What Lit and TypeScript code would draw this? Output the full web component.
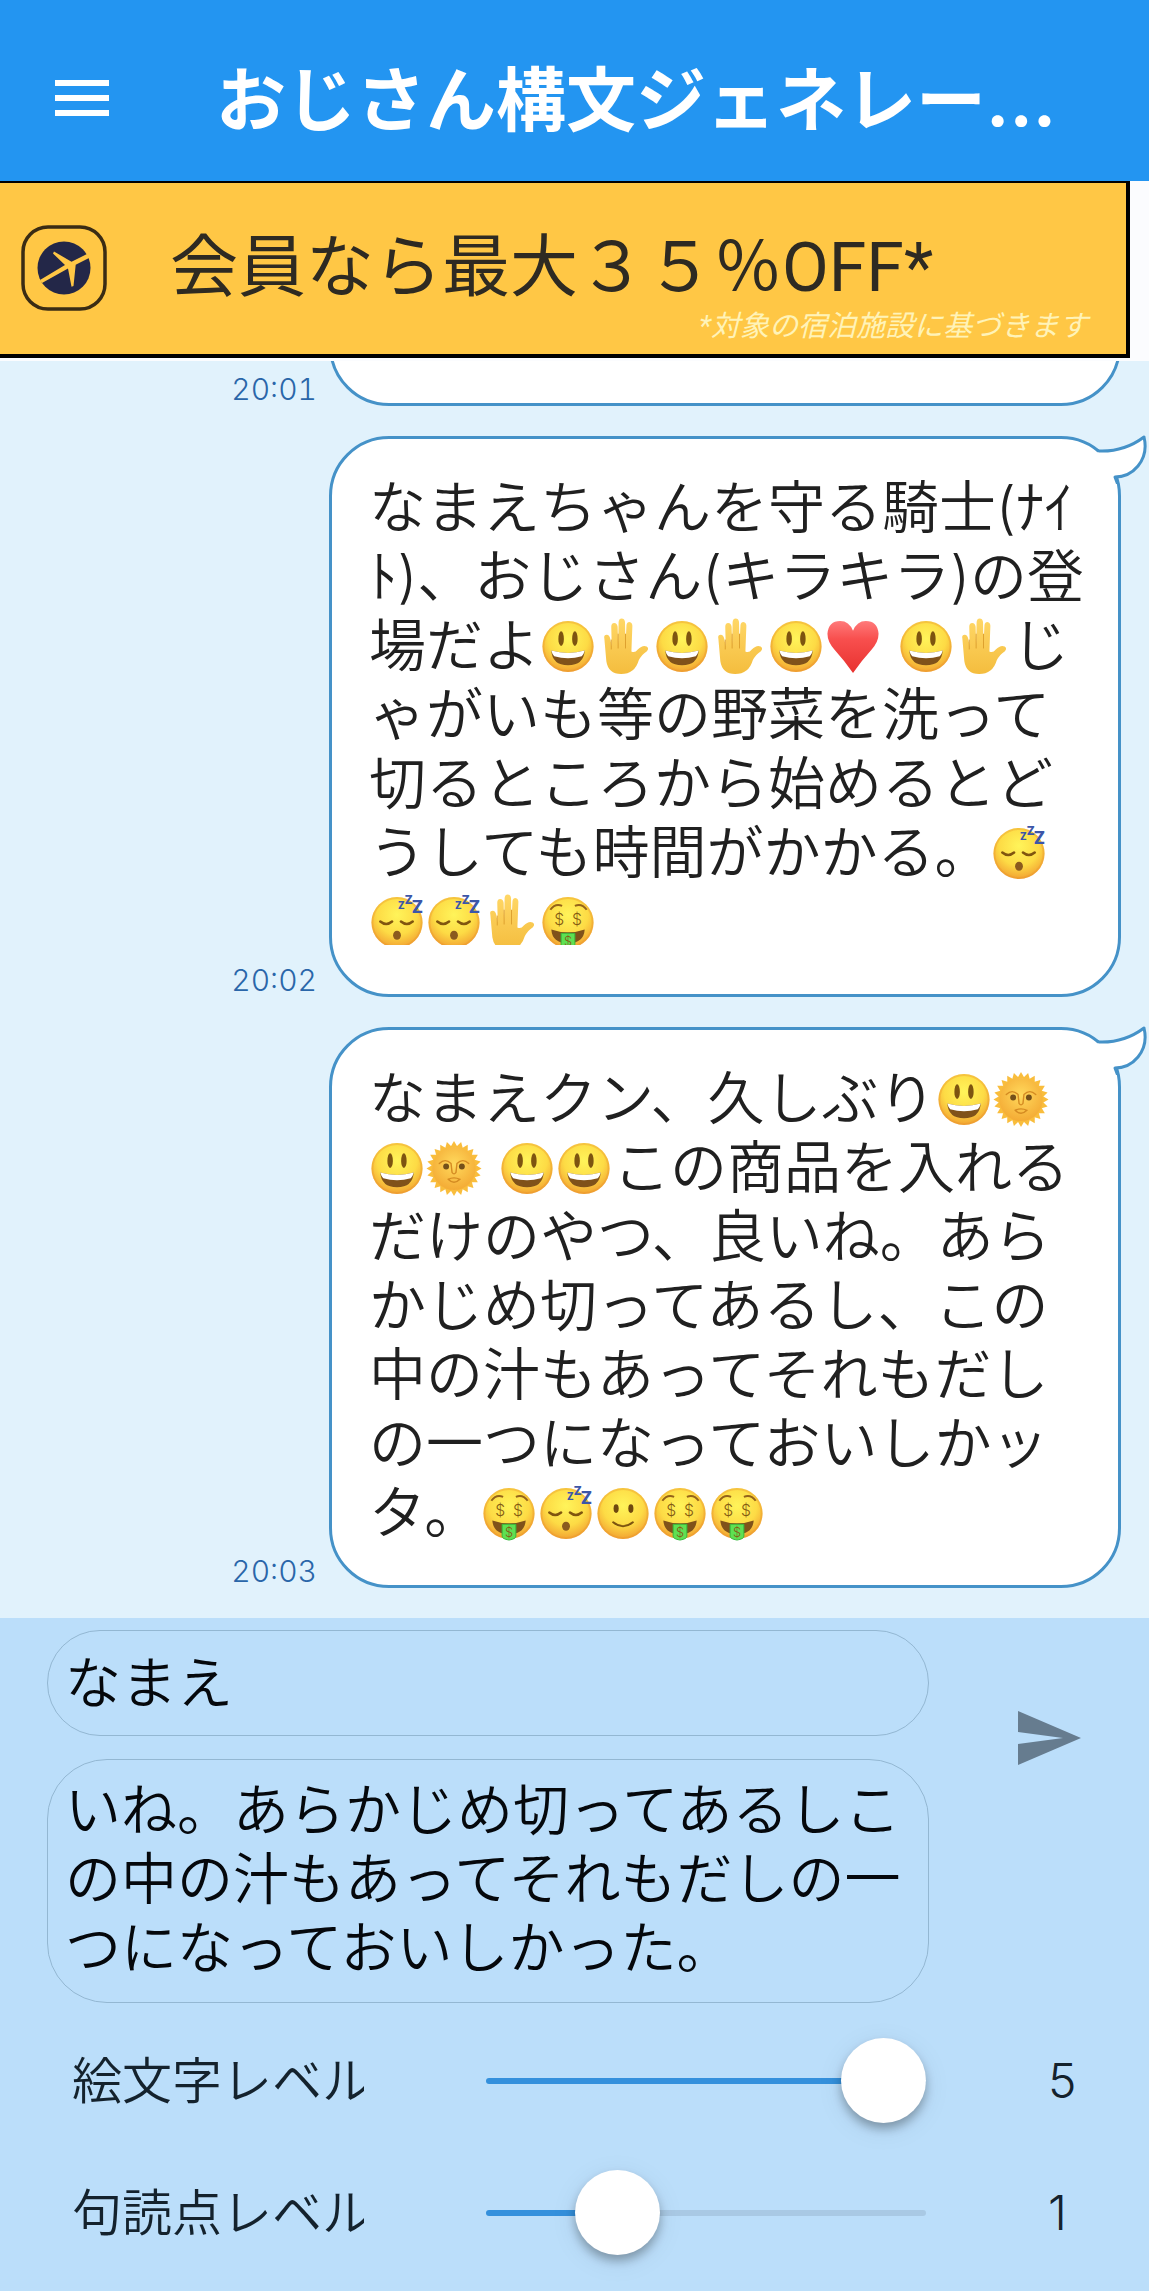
import { LitElement, css, html, svg, nothing } from "lit";
import { customElement, property, state } from "lit/decorators.js";

type Message = {
  time: string;
  text: string;
  cropped?: boolean;
};

const MESSAGES: Message[] = [
  { time: "20:01", text: "" },
  {
    time: "20:02",
    text: `なまえちゃんを守る騎士(ﾅｲ
ﾄ)、おじさん(キラキラ)の登
場だよ😃✋😃✋😃❤ 😃✋じ
ゃがいも等の野菜を洗って
切るところから始めるとど
うしても時間がかかる。😴
😴😴✋🤑`,
    cropped: true,
  },
  {
    time: "20:03",
    text: `なまえクン、久しぶり😃🌞
😃🌞 😃😃この商品を入れる
だけのやつ、良いね。あら
かじめ切ってあるし、この
中の汁もあってそれもだし
の一つになっておいしかッ
タ。🤑😴🙂🤑🤑`,
  },
];

const face = svg`
  <circle cx="28" cy="29" r="26" fill="url(#face)" />
  <circle cx="28" cy="29" r="25" fill="none" stroke="#e8932c" stroke-opacity="0.35" stroke-width="2" />
`;

const sunRays = Array.from(
  { length: 24 },
  (_, i) => svg`<path d="M24 8 L28 1 L32 8 z" transform="rotate(${i * 15} 28 29)" />`
);

const DRAWINGS: Record<string, unknown> = {
  "😃": svg`
    ${face}
    <ellipse cx="21" cy="21" rx="2.8" ry="7.5" fill="#7d5410" />
    <ellipse cx="35" cy="21" rx="2.8" ry="7.5" fill="#7d5410" />
    <path d="M11 33 Q28 38 45 33 Q44 48 28 48 Q12 48 11 33 z" fill="#80521a" />
    <path d="M11 33 Q28 38 45 33 Q44 37 42 39 Q28 43 14 39 Q12 37 11 33 z" fill="#fff" />
  `,
  "🙂": svg`
    ${face}
    <ellipse cx="21" cy="24" rx="2.6" ry="4.4" fill="#6f480f" />
    <ellipse cx="36" cy="24" rx="2.6" ry="4.4" fill="#6f480f" />
    <path d="M18 38 Q28 46 38 38" fill="none" stroke="#7d5410" stroke-width="2" stroke-linecap="round" />
  `,
  "😴": svg`
    ${face}
    <g fill="none" stroke="#80550f" stroke-width="2.6" stroke-linecap="round">
      <path d="M11 28 Q17 33 23 28" />
      <path d="M32 28 Q38 33 44 28" />
    </g>
    <ellipse cx="28" cy="42" rx="4" ry="4.6" fill="#8b5a1e" />
    <g class="snore">
      <text x="29" y="15" font-size="10">Z</text>
      <text x="36" y="10" font-size="12">Z</text>
      <text x="43" y="19" font-size="17">Z</text>
    </g>
  `,
  "🤑": svg`
    ${face}
    <path d="M10 16 Q15 9 22 12 M35 12 Q42 9 47 16" fill="none" stroke="#94621a" stroke-width="2" />
    <path d="M11 36 Q28 42 45 36 Q44 50 28 50 Q12 50 11 36 z" fill="#80521a" />
    <path d="M21 40 h14 v12 q0 3 -7 4 q-7 -1 -7 -4 z" fill="#5ee052" stroke="#35b83c" />
    <g class="dollar">
      <text x="19" y="32" font-size="16">$</text>
      <text x="37" y="32" font-size="16">$</text>
      <text x="28" y="53" font-size="13">$</text>
    </g>
  `,
  "🌞": svg`
    <g fill="#f9bd3c">${sunRays}</g>
    <circle cx="28" cy="29" r="22" fill="url(#sun)" />
    <circle cx="20" cy="27" r="3" fill="#74501a" />
    <circle cx="36" cy="27" r="3" fill="#74501a" />
    <g fill="none" stroke="#d58b22" stroke-width="1.4" stroke-linecap="round">
      <path d="M13 24 Q19 18 25 24 L26 33 Q28 36 30 33 L31 24 Q37 18 43 24" />
      <path d="M22 40 Q28 37 34 40 Q28 46 22 40" />
    </g>
  `,
  "✋": svg`
    <path
      d="M9 44 L7 21 Q6 17 9.5 17 Q12 17 13 21 L14.5 29 L14 9 Q14 5 17 5 Q20 5 20.5 9 L21 27 L21.5 4 Q22 0.5 24.5 0.5 Q27.5 0.5 28 4 L28.5 27 L29.5 7 Q30 4 32.5 4 Q35.5 4.5 35.5 8 L34.5 34 Q38 36 41 32 Q46 27 50 29 Q53 31 50 34 Q45 37 42 43 Q38 57 24 57 Q11 57 9 44 z"
      fill="url(#hand)"
    />
    <path d="M14 22 V32 M21 16 V31 M28.5 16 V31" fill="none" stroke="#dda02e" stroke-width="1" />
  `,
  "❤": svg`
    <path
      d="M28 56 Q19 43 9 32 Q2 24 2 16 Q3 3 15 3 Q24 3 28 13 Q32 3 41 3 Q53 3 54 16 Q54 24 47 32 Q37 43 28 56 z"
      fill="url(#heart)"
    />
  `,
};

@customElement("app-emoji")
export class AppEmoji extends LitElement {
  @property()
  char = "";

  render() {
    return html`
      <svg viewBox="0 0 57 58" role="img" aria-label=${this.char}>
        <defs>
          <radialGradient id="face" cx="0.5" cy="0.35" r="0.65">
            <stop offset="0" stop-color="#fff45a" />
            <stop offset="0.6" stop-color="#fddb45" />
            <stop offset="1" stop-color="#f2a232" />
          </radialGradient>
          <radialGradient id="sun" cx="0.5" cy="0.4" r="0.6">
            <stop offset="0" stop-color="#ffd95c" />
            <stop offset="1" stop-color="#f4ab35" />
          </radialGradient>
          <linearGradient id="hand" x1="0" y1="0" x2="0" y2="1">
            <stop offset="0" stop-color="#ffd766" />
            <stop offset="1" stop-color="#f4bd3e" />
          </linearGradient>
          <linearGradient id="heart" x1="0" y1="0" x2="0" y2="1">
            <stop offset="0" stop-color="#ff7a7a" />
            <stop offset="0.35" stop-color="#f84f4e" />
            <stop offset="1" stop-color="#e8322f" />
          </linearGradient>
        </defs>
        ${DRAWINGS[this.char] ?? nothing}
      </svg>
    `;
  }

  static styles = css`
    :host {
      display: inline-block;
      width: 57px;
      height: 57px;
      vertical-align: -9px;
      white-space: normal;
    }
    svg {
      display: block;
      width: 100%;
      height: 100%;
      overflow: visible;
    }
    text {
      font-family: Inter, sans-serif;
    }
    .snore {
      fill: #3c56a8;
      font-weight: 800;
    }
    .dollar {
      fill: #855a12;
      text-anchor: middle;
    }
  `;
}

@customElement("chat-message")
export class ChatMessage extends LitElement {
  @property()
  time = "";

  @property()
  text = "";

  @property({ type: Boolean })
  cropped = false;

  render() {
    const parts = this.text.split(/(😃|🙂|😴|🤑|🌞|✋|❤)/u);
    return html`
      <time>${this.time}</time>
      <div class="bubble">
        <p class=${this.cropped ? "cropped" : ""}>${parts.map((part) =>
          part in DRAWINGS ? html`<app-emoji char=${part}></app-emoji>` : part
        )}</p>
        <svg class="tail" viewBox="0 0 59 52" aria-hidden="true">
          <path d="M8 19 Q34 20 54 5 Q58 22 48 34 Q39 45 26 45 L6 46 z" fill="#fff" />
          <path
            d="M7 18 L9 19 Q34 20 54 5 Q58 22 48 34 Q39 45 25 45 L28 53"
            fill="none"
            stroke="#4592c8"
            stroke-width="3"
            stroke-linejoin="round"
          />
        </svg>
      </div>
    `;
  }

  static styles = css`
    :host {
      display: flex;
      flex: none;
      align-items: flex-end;
      gap: 12px;
    }

    time {
      flex: none;
      width: 317px;
      color: #2a66a9;
      font-size: 30px;
      font-variant-numeric: tabular-nums;
      line-height: 34px;
      text-align: right;
    }

    .bubble {
      position: relative;
      box-sizing: border-box;
      flex: 1;
      min-width: 0;
      min-height: 180px;
      padding: 34px 0 38px 37px;
      border: 3px solid #4592c8;
      border-radius: 60px;
      background: #fff;
    }

    p {
      margin: 0;
      color: #202020;
      font-size: 57px;
      line-height: 69px;
      white-space: pre;
    }
    p.cropped {
      max-height: 472px;
      margin-bottom: 11px;
      overflow: hidden;
    }

    .tail {
      position: absolute;
      top: -7px;
      right: -31px;
      width: 59px;
      height: 52px;
    }
  `;
}

@customElement("level-slider")
export class LevelSlider extends LitElement {
  @property()
  label = "";

  @property({ type: Number })
  max = 5;

  @property({ type: Number })
  value = 0;

  private onInput(e: Event) {
    this.value = Number((e.target as HTMLInputElement).value);
  }

  render() {
    return html`
      <label for="level">${this.label}</label>
      <input
        id="level"
        type="range"
        min="0"
        max=${this.max}
        .value=${String(this.value)}
        style="--fill: ${(this.value / this.max) * 100}%"
        @input=${this.onInput}
      />
      <output for="level">${this.value}</output>
    `;
  }

  static styles = css`
    :host {
      display: flex;
      align-items: center;
      height: 132px;
      padding-left: 72px;
      color: #14222d;
    }

    label {
      flex: none;
      width: 292px;
      overflow: hidden;
      font-size: 50px;
      line-height: 72px;
      white-space: nowrap;
    }

    input {
      appearance: none;
      flex: 1;
      min-width: 0;
      height: 85px;
      margin: 0 122px;
      background: none;
    }
    input::-webkit-slider-runnable-track {
      height: 6px;
      border-radius: 3px;
      background: linear-gradient(
        to right,
        #3490dc var(--fill),
        #a9c9e4 var(--fill)
      );
    }
    input::-webkit-slider-thumb {
      appearance: none;
      width: 85px;
      height: 85px;
      margin-top: -40px;
      border-radius: 50%;
      background: #fff;
      box-shadow: 0 6px 10px rgba(0, 0, 0, 0.28), 0 6px 28px rgba(0, 0, 0, 0.08);
    }

    output {
      flex: none;
      width: 101px;
      font-size: 48px;
      line-height: 72px;
    }
  `;
}

@customElement("app-root")
export class AppRoot extends LitElement {
  @state()
  private name = "なまえ";

  @state()
  private draft =
    "いね。あらかじめ切ってあるしこの中の汁もあってそれもだしの一つになっておいしかった。";

  render() {
    return html`
      <header>
        <button class="menu" aria-label="メニュー">
          <svg viewBox="0 0 24 24"><path d="M3 6h18v2H3zM3 11h18v2H3zM3 16h18v2H3z" /></svg>
        </button>
        <h1>おじさん構文ジェネレー...</h1>
      </header>

      <div class="ad">
        <a href="#">
          <span class="offer">
            <svg viewBox="0 0 86 86" aria-hidden="true">
              <rect x="2" y="2" width="82" height="82" rx="25" fill="none" stroke="#3a2c14" stroke-width="3.5" />
              <circle cx="43" cy="43" r="26.5" fill="#232748" />
              <path
                d="M19 55 L44 40 L32 28.5 L33 26.5 L50.5 36.7 L66 29 L69 32.5 L54.7 39.7 L52.5 61 L50.5 61.7 L47 43.4 L21 58 z"
                fill="#ffc745"
              />
            </svg>
            <span>会員なら最大３５％OFF*</span>
          </span>
          <small>*対象の宿泊施設に基づきます</small>
        </a>
      </div>

      <main>
        ${MESSAGES.map(
          (m) => html`<chat-message
            .time=${m.time}
            .text=${m.text}
            .cropped=${m.cropped ?? false}
          ></chat-message>`
        )}
      </main>

      <footer>
        <form @submit=${(e: Event) => e.preventDefault()}>
          <div class="fields">
            <input
              aria-label="名前"
              .value=${this.name}
              @input=${(e: Event) => (this.name = (e.target as HTMLInputElement).value)}
            />
            <textarea
              aria-label="本文"
              rows="3"
              .value=${this.draft}
              @input=${(e: Event) => (this.draft = (e.target as HTMLTextAreaElement).value)}
            ></textarea>
          </div>
          <button class="send" aria-label="送信">
            <svg viewBox="0 0 24 24"><path d="M2.01 21 23 12 2.01 3 2 10l15 2-15 2z" /></svg>
          </button>
        </form>
        <level-slider label="絵文字レベル" max="5" value="5"></level-slider>
        <level-slider label="句読点レベル" max="4" value="1"></level-slider>
      </footer>
    `;
  }

  static styles = css`
    :host {
      display: flex;
      flex-direction: column;
      height: 100vh;
      background: #fbfcfe;
      font-family: Inter, "Noto Sans CJK JP", sans-serif;
      font-weight: 350;
    }

    button {
      flex: none;
      width: 72px;
      height: 72px;
      padding: 0;
      border: none;
      background: none;
    }
    button svg {
      display: block;
      width: 72px;
      height: 72px;
      fill: currentColor;
    }

    header {
      display: flex;
      flex: none;
      align-items: center;
      gap: 98px;
      box-sizing: border-box;
      height: 181px;
      padding: 14px 46px 0;
      background: #2395f1;
      color: #fff;
    }
    .menu {
      color: #fff;
    }
    h1 {
      margin: 0;
      padding-top: 6px;
      font-size: 70px;
      font-weight: 700;
      line-height: 84px;
      white-space: nowrap;
    }

    .ad {
      flex: none;
      padding: 0 19px 3px 0;
    }
    .ad a {
      display: flex;
      flex-direction: column;
      padding: 42px 38px 13px 21px;
      border: solid #000;
      border-width: 2px 4px 4px 0;
      background: #ffc745;
      color: #2e2a22;
      font-family: Roboto, "Noto Sans CJK JP", sans-serif;
      font-weight: 400;
      text-decoration: none;
    }
    .offer {
      display: flex;
      align-items: center;
      gap: 63px;
      font-size: 68px;
      line-height: 86px;
      white-space: nowrap;
    }
    .offer svg {
      flex: none;
      width: 86px;
      height: 86px;
    }
    small {
      align-self: flex-end;
      color: #fff3b8;
      font-size: 29px;
      font-style: italic;
      line-height: 30px;
    }

    main {
      display: flex;
      flex: 1;
      flex-direction: column;
      justify-content: flex-end;
      gap: 30px;
      min-height: 0;
      padding: 0 28px 30px 0;
      overflow: hidden;
      background: #e1f2fc;
    }

    footer {
      flex: none;
      padding: 12px 0;
      background: #bbdefa;
    }
    form {
      display: flex;
      gap: 83px;
      padding: 0 65px 12px 47px;
    }
    .fields {
      display: flex;
      flex: 1;
      flex-direction: column;
      gap: 23px;
      min-width: 0;
    }
    input,
    textarea {
      box-sizing: border-box;
      width: 100%;
      margin: 0;
      border: 1px solid #93b7d2;
      border-radius: 60px;
      outline: none;
      background: none;
      color: #05080c;
      font: inherit;
      font-size: 56px;
      line-height: 69px;
    }
    input {
      height: 106px;
      padding: 0 17px 10px;
    }
    textarea {
      display: block;
      height: auto;
      padding: 16px 17px 19px;
      overflow: hidden;
      resize: none;
    }
    .send {
      margin-top: 72px;
      color: #667c8f;
    }
  `;
}

declare global {
  interface HTMLElementTagNameMap {
    "app-emoji": AppEmoji;
    "chat-message": ChatMessage;
    "level-slider": LevelSlider;
    "app-root": AppRoot;
  }
}
